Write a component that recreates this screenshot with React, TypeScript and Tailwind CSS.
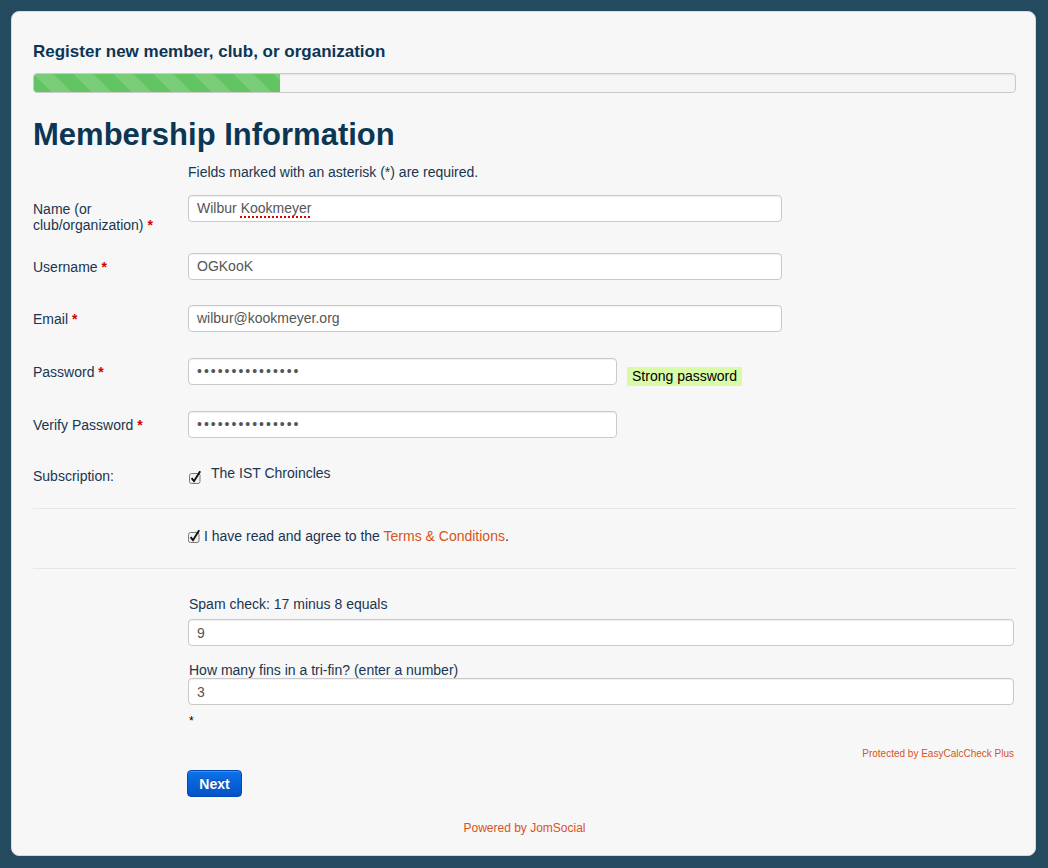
import React from "react";

function Check() {
  return (
    <svg width="13" height="14" viewBox="0 0 13 14" className="shrink-0">
      <rect x="0.5" y="3.5" width="10.5" height="10" rx="2" fill="#f1f1f1" stroke="#7a7a7a" />
      <path d="M2.6 8.2 L5 11.2 L11.2 1.2" stroke="#111" strokeWidth="1.9" fill="none" />
    </svg>
  );
}

function Req() {
  return <span className="font-bold text-[#d40000]"> *</span>;
}

function Field({ children, w = "w-[594px]" }: { children: React.ReactNode; w?: string }) {
  return (
    <div
      className={`${w} h-[27px] rounded-[4px] border border-[#c9c9c9] bg-white pl-[8px] flex items-center text-[14px] text-[#555] shadow-[inset_0_1px_1px_rgba(0,0,0,0.06)]`}
    >
      {children}
    </div>
  );
}

export default function App() {
  const dots = "•••••••••••••••";
  return (
    <div
      className="h-[868px] bg-[#234a5f] pt-[11px] pl-[11px]"
      style={{ fontFamily: '"Liberation Sans", Arial, sans-serif' }}
    >
      <div className="w-[1025px] h-[845px] rounded-[8px] border border-[#d8d8d8] bg-[#f7f7f7] pl-[21px] pr-[19px] pt-[30px] text-[14px] text-[#1a3550]">
        {/* Header */}
        <h2 className="text-[17px] leading-[20px] font-bold text-[#0d3553]">
          Register new member, club, or organization
        </h2>
        <div className="mt-[11px] h-[20px] rounded-[4px] border border-[#cacaca] bg-[#f5f5f5] shadow-[inset_0_1px_2px_rgba(0,0,0,0.08)] overflow-hidden">
          <div className="h-full w-[246px] bg-[#62c462] bg-[linear-gradient(45deg,rgba(255,255,255,0.15)_25%,transparent_25%,transparent_50%,rgba(255,255,255,0.15)_50%,rgba(255,255,255,0.15)_75%,transparent_75%,transparent)] bg-[length:40px_40px]" />
        </div>
        <h1 className="mt-[23px] text-[31px] leading-[38px] font-bold text-[#0b3654]">
          Membership Information
        </h1>

        <div className="ml-[155px] mt-[8px] leading-[20px]">
          Fields marked with an asterisk (*) are required.
        </div>

        {/* Form rows */}
        <div className="mt-[13px]">
          <div className="flex mb-[20px]">
            <div className="w-[155px] pt-[6px] leading-[16px]">
              Name (or
              <br />
              club/organization)
              <Req />
            </div>
            <Field>
              Wilbur{" "}
              <span className="ml-[4px] underline decoration-dotted decoration-[#e00000] decoration-2 underline-offset-[3px]">
                Kookmeyer
              </span>
            </Field>
          </div>

          <div className="flex items-center mb-[25px]">
            <div className="w-[155px] leading-[16px]">
              Username
              <Req />
            </div>
            <Field>OGKooK</Field>
          </div>

          <div className="flex items-center mb-[25px]">
            <div className="w-[155px] leading-[16px]">
              Email
              <Req />
            </div>
            <Field>wilbur@kookmeyer.org</Field>
          </div>

          <div className="flex items-center mb-[25px]">
            <div className="w-[155px] leading-[16px]">
              Password
              <Req />
            </div>
            <Field w="w-[429px]">
              <span className="tracking-[2px] text-[#555] text-[14px]">{dots}</span>
            </Field>
            <span className="ml-[10px] mt-[10px] h-[19px] px-[5px] flex items-center bg-[#d9fba8] text-black">
              Strong password
            </span>
          </div>

          <div className="flex items-center mb-[26px]">
            <div className="w-[155px] leading-[16px]">
              Verify Password
              <Req />
            </div>
            <Field w="w-[429px]">
              <span className="tracking-[2px] text-[#555] text-[14px]">{dots}</span>
            </Field>
          </div>

          <div className="flex pb-[24px] border-b border-[#e6e6e6]">
            <div className="w-[155px] pt-[4px] leading-[16px]">Subscription:</div>
            <div className="flex items-start leading-[16px] pt-[1px]">
              <span className="mt-[5px] ml-[1px]">
                <Check />
              </span>
              <span className="ml-[9px]">The IST Chroincles</span>
            </div>
          </div>

          <div className="flex pt-[19px] pb-[24px] border-b border-[#e6e6e6]">
            <div className="w-[155px]" />
            <div className="flex items-start leading-[16px]">
              <span className="mt-[1px]">
                <Check />
              </span>
              <span className="ml-[3px]">
                I have read and agree to the{" "}
                <span className="text-[#d5541d]">Terms &amp; Conditions</span>.
              </span>
            </div>
          </div>
        </div>

        {/* Spam check */}
        <div className="ml-[155px] mr-[2px] leading-[16px]">
          <div className="mt-[27px] pl-[1px]">Spam check: 17 minus 8 equals</div>
          <div className="mt-[7px]">
            <Field w="w-full">9</Field>
          </div>
          <div className="mt-[16px] pl-[1px]">How many fins in a tri-fin? (enter a number)</div>
          <div>
            <Field w="w-full">3</Field>
          </div>
          <div className="mt-[8px] pl-[1px] text-[12px] text-black">*</div>
          <div className="mt-[18px] text-right text-[10px] leading-[14px] text-[#d5541d]">
            Protected by EasyCalcCheck Plus
          </div>
          <button className="mt-[9px] -ml-[1px] w-[55px] h-[27px] rounded-[4px] border border-[#0349b3] bg-[linear-gradient(#0c72ea,#0352c6)] text-white font-bold text-[14px] [text-shadow:0_-1px_0_rgba(0,0,0,0.25)] shadow-[inset_0_1px_0_rgba(255,255,255,0.2)]">
            Next
          </button>
        </div>

        <div className="mt-[23px] text-center text-[12px] leading-[16px] text-[#d5541d]">
          Powered by JomSocial
        </div>
      </div>
    </div>
  );
}
